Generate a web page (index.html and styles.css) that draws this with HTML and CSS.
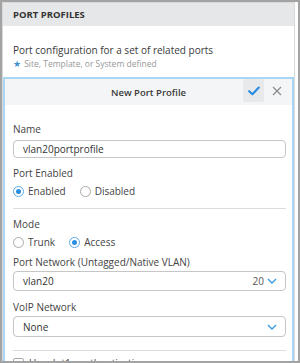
FILE: index.html
```html
<!DOCTYPE html>
<html lang="en">
<head>
    <meta charset="UTF-8">
    <title>Port Profiles</title>
    <link rel="stylesheet" href="styles.css">
</head>
<body>
    <div class="frame">
        <div class="panel">
            <div class="panel-header">PORT PROFILES</div>
            <div class="panel-intro">
                <div class="intro-text">Port configuration for a set of related ports</div>
                <div class="intro-note"><span class="star">&#9733;</span> Site, Template, or System defined</div>
            </div>

            <div class="card">
                <div class="card-header">
                    <div class="card-title">New Port Profile</div>
                    <div class="card-actions">
                        <button class="icon-btn save">
                            <svg width="12" height="10" viewBox="0 0 12 10"><path d="M1.2 5.2 L4.4 8.2 L10.8 1.6" fill="none" stroke="#2a8ee0" stroke-width="2.2" stroke-linecap="round" stroke-linejoin="round"/></svg>
                        </button>
                        <button class="icon-btn close">
                            <svg width="10" height="10" viewBox="0 0 10 10"><path d="M1 1 L9 9 M9 1 L1 9" stroke="#8a8a8a" stroke-width="1.2"/></svg>
                        </button>
                    </div>
                </div>

                <div class="card-body">
                    <div class="label">Name</div>
                    <div class="input name-input">vlan20portprofile</div>

                    <div class="label gap-8">Port Enabled</div>
                    <div class="radios">
                        <span class="radio checked"></span><span class="radio-text">Enabled</span>
                        <span class="radio"></span><span class="radio-text">Disabled</span>
                    </div>

                    <div class="divider first"></div>

                    <div class="label">Mode</div>
                    <div class="radios">
                        <span class="radio"></span><span class="radio-text">Trunk</span>
                        <span class="radio checked"></span><span class="radio-text">Access</span>
                    </div>

                    <div class="label gap-6 tight">Port Network (Untagged/Native VLAN)</div>
                    <div class="input select">
                        <span>vlan20</span>
                        <span class="select-right">20 <svg class="chev" width="10" height="6" viewBox="0 0 10 6"><path d="M1 1 L5 5 L9 1" fill="none" stroke="#3a9ae0" stroke-width="1.4"/></svg></span>
                    </div>

                    <div class="label gap-9 tight">VoIP Network</div>
                    <div class="input select tall">
                        <span>None</span>
                        <span class="select-right"><svg class="chev" width="10" height="6" viewBox="0 0 10 6"><path d="M1 1 L5 5 L9 1" fill="none" stroke="#3a9ae0" stroke-width="1.4"/></svg></span>
                    </div>

                    <div class="divider last"></div>

                    <div class="check-row">
                        <span class="checkbox"></span><span class="radio-text">Use dot1x authentication</span>
                    </div>
                </div>
            </div>
        </div>
    </div>
</body>
</html>
```

FILE: styles.css
```css
html, body {
    margin: 0;
    padding: 0;
}
body {
    font-family: 'Open Sans', 'Liberation Sans', sans-serif;
    font-size: 10px;
    color: #444;
    background: #fff;
}
.frame {
    width: 300px;
    height: 363px;
    box-sizing: border-box;
    border: 2px solid #a3a3a3;
    padding-right: 3px;
    overflow: hidden;
    background: #fff;
}
.panel {
    border: 1px solid #d9d9d9;
    border-bottom: none;
    height: 100%;
}
.panel-header {
    background: #e6e7e8;
    height: 23px;
    line-height: 23px;
    padding-left: 10px;
    font-weight: 700;
    font-size: 9.5px;
    color: #333;
}
.panel-intro {
    padding: 17px 10px 7px;
}
.intro-text {
    font-size: 10px;
    color: #3a3a3a;
    line-height: 14px;
}
.intro-note {
    font-size: 8.5px;
    color: #999;
    line-height: 13px;
}
.star {
    color: #3d8fd1;
    font-size: 9px;
    margin-right: 1px;
}
.card {
    border: 2px solid #a9d6f4;
    border-bottom: none;
    background: #fff;
}
.card-header {
    position: relative;
    background: #f4f5f7;
    height: 26px;
    display: flex;
    align-items: center;
    justify-content: center;
}
.card-title {
    font-weight: 600;
    font-size: 9.5px;
    color: #3a3a3a;
}
.card-actions {
    position: absolute;
    right: 5px;
    top: 0;
    display: flex;
    gap: 2px;
}
.icon-btn {
    border: none;
    background: none;
    padding: 0;
    width: 21px;
    height: 23px;
    display: flex;
    align-items: center;
    justify-content: center;
    border-radius: 2px;
}
.icon-btn.save {
    background: #e8e9eb;
}
.card-body {
    padding: 17px 6px 0 8px;
}
.label {
    font-size: 10px;
    color: #444;
    line-height: 14px;
    margin-bottom: 4px;
}
.label.tight {
    margin-bottom: 2px;
}
.gap-6 {
    margin-top: 6px;
}
.gap-8 {
    margin-top: 8px;
}
.gap-9 {
    margin-top: 9px;
}
.input {
    height: 18px;
    box-sizing: border-box;
    border: 1px solid #c6c6c6;
    border-radius: 4px;
    padding: 0 9px;
    line-height: 16px;
    font-size: 10px;
    color: #333;
}
.select {
    height: 20px;
    line-height: 18px;
    display: flex;
    justify-content: space-between;
    align-items: center;
    padding-right: 8px;
}
.select.tall {
    height: 21px;
}
.select-right {
    display: flex;
    align-items: center;
    gap: 3px;
    color: #555;
}
.radios {
    display: flex;
    align-items: center;
    height: 14px;
}
.radio {
    width: 9px;
    height: 9px;
    border: 1px solid #aaa;
    border-radius: 50%;
    box-sizing: content-box;
    position: relative;
    margin-right: 4px;
}
.radio.checked {
    border-color: #5aa9e6;
}
.radio.checked::after {
    content: "";
    position: absolute;
    left: 2px;
    top: 2px;
    width: 5px;
    height: 5px;
    border-radius: 50%;
    background: #2a8ee0;
}
.radio-text {
    margin-right: 14px;
    color: #444;
}
.divider {
    height: 1px;
    background: #dcdcdc;
}
.divider.first {
    margin: 10px 0 8px;
}
.divider.last {
    margin: 13px 0 5px;
}
.check-row {
    display: flex;
    align-items: center;
}
.checkbox {
    width: 9px;
    height: 9px;
    border: 1px solid #aaa;
    border-radius: 2px;
    margin-right: 5px;
}
```
